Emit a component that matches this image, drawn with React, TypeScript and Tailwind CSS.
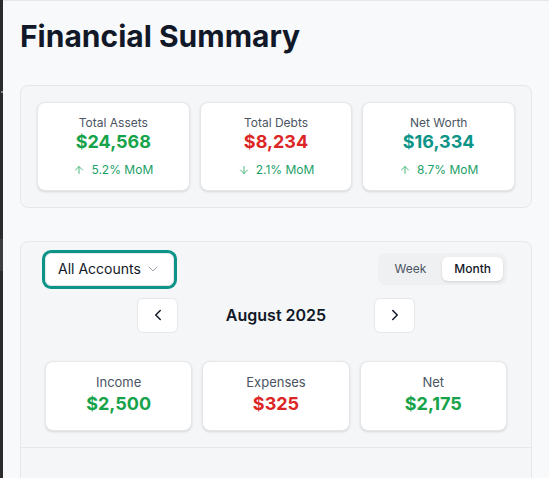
import { ArrowDown, ArrowUp, ChevronDown, ChevronLeft, ChevronRight } from 'lucide-react';

const summary = [
  { label: 'Total Assets', value: '$24,568', color: 'text-[#16a34a]', change: '5.2% MoM', up: true },
  { label: 'Total Debts', value: '$8,234', color: 'text-[#dc2626]', change: '2.1% MoM', up: false },
  { label: 'Net Worth', value: '$16,334', color: 'text-[#0d9488]', change: '8.7% MoM', up: true },
];

const period = [
  { label: 'Income', value: '$2,500', color: 'text-[#16a34a]' },
  { label: 'Expenses', value: '$325', color: 'text-[#dc2626]' },
  { label: 'Net', value: '$2,175', color: 'text-[#16a34a]' },
];

export default function App() {
  return (
    <div className="flex min-h-screen font-[Inter,sans-serif]">
      {/* edge of the neighbouring window */}
      <div className="w-[3px] shrink-0 bg-[#2b2b2b]">
        <div className="h-[91px]" />
        <div className="ml-px h-[2px] w-[2px] bg-[#8a8a8a]" />
        <div className="h-[146px]" />
        <div className="h-[32px] bg-[#3d3d3d]" />
      </div>

      <main className="flex-1 border-t border-gray-200 bg-[#f8f9fb] px-[17px] pt-[17px]">
        <h1 className="text-3xl font-bold text-[#111827]">Financial Summary</h1>

        <section className="mt-[31px] rounded-lg border border-[#e5e7eb] bg-[#f5f6f7] p-4">
          <div className="grid grid-cols-3 gap-2.5">
            {summary.map((s) => (
              <div
                key={s.label}
                className="rounded-lg border border-[#e5e7eb] bg-white p-3 text-center shadow-sm"
              >
                <div className="text-xs leading-4 text-[#4b5563]">{s.label}</div>
                <div className={`text-lg font-bold leading-tight ${s.color}`}>{s.value}</div>
                <div className="mt-2 flex items-center justify-center gap-1.5 text-xs leading-4 text-[#1a9f68]">
                  {s.up ? (
                    <ArrowUp size={12} className="text-[#4cb97c]" />
                  ) : (
                    <ArrowDown size={12} className="text-[#4cb97c]" />
                  )}
                  <span>{s.change}</span>
                </div>
              </div>
            ))}
          </div>
        </section>

        <section className="mt-[33px] rounded-lg border border-[#e5e7eb] bg-[#f5f6f7]">
          <div className="px-6 pb-4 pt-[11px]">
            <div className="flex items-center justify-between">
              <button className="flex h-[33px] items-center gap-1 rounded-md border border-[#e5e7eb] bg-white px-3 text-sm text-[#111827] ring-[3px] ring-[#0d9488]">
                All Accounts
                <ChevronDown size={16} strokeWidth={1.5} className="text-[#9ca3af]" />
              </button>
              <div className="flex gap-1 rounded-lg bg-[#eff0f2] p-1">
                <button className="rounded-md px-3 py-0.5 text-xs leading-5 text-[#4b5563]">Week</button>
                <button className="rounded-md bg-white px-3 py-0.5 text-xs font-medium leading-5 text-[#111827] shadow-sm">
                  Month
                </button>
              </div>
            </div>

            <div className="mt-3 flex items-center justify-center">
              <button className="flex h-[35px] w-[41px] items-center justify-center rounded-md border border-[#e5e7eb] bg-white text-[#111827]">
                <ChevronLeft size={18} />
              </button>
              <div className="w-[196px] text-center text-base font-semibold text-[#111827]">August 2025</div>
              <button className="flex h-[35px] w-[41px] items-center justify-center rounded-md border border-[#e5e7eb] bg-white text-[#111827]">
                <ChevronRight size={18} />
              </button>
            </div>

            <div className="mt-7 grid grid-cols-3 gap-2.5">
              {period.map((p) => (
                <div
                  key={p.label}
                  className="rounded-lg border border-[#e5e7eb] bg-white p-3 text-center shadow-sm"
                >
                  <div className="text-[13px] leading-4 text-[#4b5563]">{p.label}</div>
                  <div className={`text-lg font-bold ${p.color}`}>{p.value}</div>
                </div>
              ))}
            </div>
          </div>
          <div className="h-40 border-t border-[#e5e7eb]" />
        </section>
      </main>
    </div>
  );
}
